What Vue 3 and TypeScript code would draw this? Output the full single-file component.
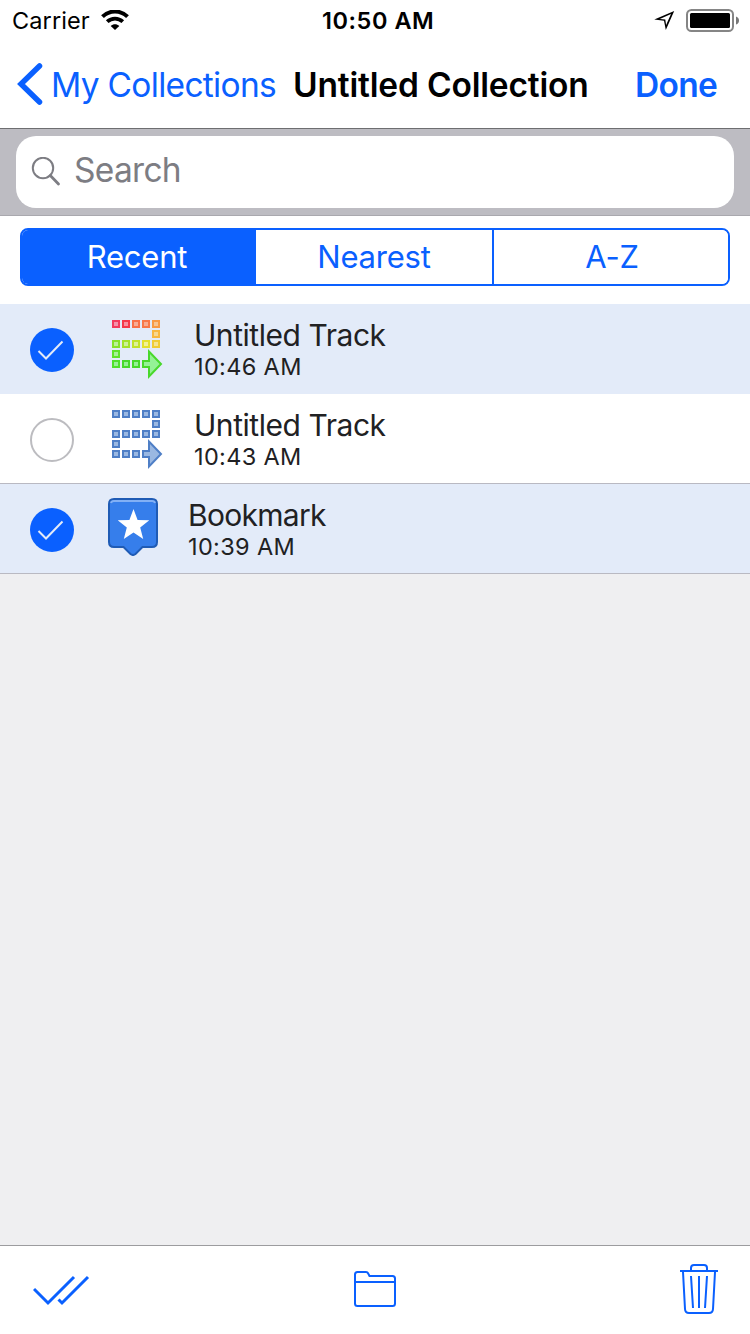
<script setup lang="ts">
import { ref } from 'vue'

interface Item {
  title: string
  time: string
  kind: 'rainbow' | 'blue' | 'bookmark'
  selected: boolean
}

interface Dot {
  x: number
  y: number
  stroke: string
  fill: string
}

const segments = ['Recent', 'Nearest', 'A-Z']
const active = ref(0)

const items = ref<Item[]>([
  { title: 'Untitled Track', time: '10:46 AM', kind: 'rainbow', selected: true },
  { title: 'Untitled Track', time: '10:43 AM', kind: 'blue', selected: false },
  { title: 'Bookmark', time: '10:39 AM', kind: 'bookmark', selected: true },
])

const points: [number, number][] = [
  [0, 0], [10, 0], [20, 0], [30, 0], [40, 0], [40, 10],
  [40, 20], [30, 20], [20, 20], [10, 20], [0, 20], [0, 30],
  [0, 40], [10, 40], [20, 40],
]
const strokes = [
  '#f23b5f', '#f5384a', '#f87048', '#f87848', '#f89a44', '#f8b840',
  '#f0cc34', '#e2e030', '#c0e22c', '#a2e22c', '#84e22c', '#60e22c',
  '#50e02c', '#48d82c', '#48d82c',
]
const fills = [
  '#f492ac', '#f890a0', '#f8ac94', '#f8ac90', '#f8c490', '#f8d890',
  '#f6e490', '#f2f298', '#def298', '#ccf298', '#baf298', '#a6f298',
  '#98f298', '#94f296', '#94f296',
]

function dots(kind: Item['kind']): Dot[] {
  return points.map(([x, y], i) => ({
    x: x + 1,
    y: y + 1,
    stroke: kind === 'rainbow' ? strokes[i] : '#4f7fc6',
    fill: kind === 'rainbow' ? fills[i] : '#9ab8e2',
  }))
}
</script>

<template>
  <div class="screen">
    <header class="status">
      <span class="carrier">Carrier</span>
      <svg class="wifi" width="28" height="20" viewBox="0 0 28 20">
        <path d="M1.5 6.6 C8.5 -0.2 19.5 -0.2 26.5 6.6" fill="none" stroke="#000" stroke-width="4" />
        <path d="M6.2 11.7 C10.7 7.5 17.3 7.5 21.8 11.7" fill="none" stroke="#000" stroke-width="3.8" />
        <path d="M9.7 16 C12.2 13.6 15.8 13.6 18.3 16 L14 20 Z" />
      </svg>
      <span class="clock">10:50 AM</span>
      <svg class="locate" width="21" height="20" viewBox="0 0 21 20">
        <path d="M20.200 1 L0.300 9.600 L10 10.700 L11.800 20 Z M17 3.900 L12.100 15 L11.300 9.400 L5.800 8.900 Z" fill-rule="evenodd" />
      </svg>
      <svg class="battery" width="53" height="23" viewBox="0 0 53 23">
        <rect x="1" y="1" width="46" height="21" rx="4.5" fill="none" stroke="#858585" stroke-width="2" />
        <rect x="4" y="4" width="40" height="15" rx="1.5" />
        <path d="M50 7.5 Q53 8.5 53 11.5 Q53 14.500 50 15.500 Z" fill="#777" />
      </svg>
    </header>

    <nav class="nav">
      <svg class="chevron" width="26" height="44" viewBox="0 0 26 44">
        <path d="M22.500 4 L4 22 L22.500 40" fill="none" stroke="#0a60ff" stroke-width="5.500" stroke-linecap="round" stroke-linejoin="miter" />
      </svg>
      <span class="back">My Collections</span>
      <span class="title">Untitled Collection</span>
      <span class="done">Done</span>
    </nav>

    <div class="search">
      <div class="field">
        <svg width="30" height="30" viewBox="0 0 30 30" fill="none" stroke="#7d7d83">
          <circle cx="12" cy="11" r="10.200" stroke-width="2" />
          <path d="M19.300 18.600 L27.500 27" stroke-width="2.800" stroke-linecap="round" />
        </svg>
        <span class="placeholder">Search</span>
      </div>
    </div>

    <div class="filter">
      <div class="segments">
        <button
          v-for="(name, i) in segments"
          :key="name"
          :class="['segment', 's' + i, { active: active === i }]"
          @click="active = i"
        >
          <span>{{ name }}</span>
        </button>
      </div>
    </div>

    <ul class="list">
      <li
        v-for="(item, i) in items"
        :key="i"
        :class="['row', item.kind, { selected: item.selected }]"
        @click="item.selected = !item.selected"
      >
        <svg class="check" width="44" height="44" viewBox="0 0 44 44">
          <template v-if="item.selected">
            <circle cx="22" cy="22" r="22" fill="#0a60ff" />
            <path d="M8.500 23 L16 30.500 L32.500 13.500" fill="none" stroke="#e3ebf9" stroke-width="2" />
          </template>
          <circle v-else cx="22" cy="22" r="21" fill="#fff" stroke="#bcbcc0" stroke-width="2" />
        </svg>
        <svg v-if="item.kind === 'bookmark'" class="icon" width="50" height="58" viewBox="0 0 50 58">
          <path
            d="M6 1 H44 Q49 1 49 6 V44 Q49 49 44 49 H34.500 L27.500 56 Q25 58 22.500 56 L15.500 49 H6 Q1 49 1 44 V6 Q1 1 6 1 Z"
            fill="#367eeb" stroke="#1f5bb5" stroke-width="2"
          />
          <path d="M3 5 Q3.500 3 6 3 H44 Q46.500 3 47 5" fill="none" stroke="#82b0f5" stroke-width="2" />
          <path d="M25.500 11 L29.600 22 L41.300 22.300 L32.200 29.600 L35.200 41 L25.500 34.600 L15.800 41 L18.800 29.600 L9.700 22.300 L21.400 22 Z" fill="#fff" />
        </svg>
        <svg v-else class="icon" width="52" height="60" viewBox="0 0 52 60">
          <rect
            v-for="(d, n) in dots(item.kind)"
            :key="n"
            :x="d.x"
            :y="d.y"
            width="6"
            height="6"
            :fill="d.fill"
            :stroke="d.stroke"
            stroke-width="2"
          />
          <path
            d="M31 41 H37 V31.500 L49 44 L37 56.500 V47 H31 Z"
            :fill="item.kind === 'rainbow' ? '#94f296' : '#9ab8e2'"
            :stroke="item.kind === 'rainbow' ? '#48d82c' : '#4f7fc6'"
            stroke-width="2"
          />
        </svg>
        <div class="text">
          <div class="name">{{ item.title }}</div>
          <div class="time">{{ item.time }}</div>
        </div>
      </li>
    </ul>

    <main class="blank"></main>

    <footer class="toolbar">
      <svg class="double" width="58" height="32" viewBox="0 0 58 32" fill="none" stroke="#0a60ff" stroke-width="3">
        <path d="M1 15 L15 29 L41 3" />
        <path d="M25.500 25.500 L29 29 L55 3" />
      </svg>
      <svg class="folder" width="42" height="36" viewBox="0 0 42 36" fill="none" stroke="#0a60ff" stroke-width="2">
        <path d="M1 32.500 V3.500 Q1 1 3.500 1 H12 Q13.500 1 14.200 2.500 L15.500 5 H38.500 Q41 5 41 7.500 V32.500 Q41 35 38.500 35 H3.500 Q1 35 1 32.500 Z M1 11 H41" />
      </svg>
      <svg class="trash" width="38" height="50" viewBox="0 0 38 50" fill="none" stroke="#0a60ff" stroke-width="2">
        <path d="M0 7 H38 M11 7 V4 Q11 1 14 1 H24 Q27 1 27 4 V7 M3 8 L5 45 Q5.200 49 9 49 H29 Q32.800 49 33 45 L35 8 M11 12 L13 44 M19 12 V44 M27 12 L25 44" />
      </svg>
    </footer>
  </div>
</template>

<style>
body {
  margin: 0;
  background: #fff;
}
</style>

<style scoped>
.screen {
  width: 750px;
  height: 1334px;
  display: flex;
  flex-direction: column;
  overflow: hidden;
  background: #fff;
  font-family: Inter, "Liberation Sans", sans-serif;
  color: #212123;
  white-space: nowrap;
}
.status {
  height: 40px;
  box-sizing: border-box;
  display: grid;
  grid-template-columns: 101px 221px 332px 32px 64px;
  align-items: center;
  color: #000;
  font-size: 23.500px;
  line-height: 38px;
}
.status > * {
  grid-row: 1;
}
.carrier {
  grid-column: 1;
  padding: 2px 0 0 12px;
  letter-spacing: 0.100px;
}
.wifi {
  grid-column: 2;
}
.clock {
  grid-column: 3;
  padding-top: 2px;
  font-weight: 600;
  letter-spacing: 0.550px;
}
.locate {
  grid-column: 4;
}
.battery {
  grid-column: 5;
}
.nav {
  height: 88px;
  display: grid;
  grid-template-columns: 51px 242px 342px 115px;
  align-items: center;
  border-bottom: 1px solid #6e6e71;
  font-size: 33.500px;
  line-height: 86px;
  color: #0a60ff;
}
.nav span {
  padding-top: 2px;
}
.chevron {
  margin-left: 17px;
}
.back {
  letter-spacing: -0.700px;
}
.title {
  color: #000;
  font-weight: 600;
  letter-spacing: -0.180px;
}
.done {
  font-weight: 600;
  letter-spacing: -0.700px;
}
.search {
  height: 87px;
  box-sizing: border-box;
  padding: 7px 16px;
  background: #bdbcc2;
  border-bottom: 1px solid #a9a8ae;
}
.field {
  height: 72px;
  box-sizing: border-box;
  display: flex;
  align-items: center;
  gap: 13px;
  padding-left: 15px;
  border-radius: 20px;
  background: #fff;
}
.placeholder {
  padding-bottom: 4px;
  color: #7d7d83;
  font-size: 33.500px;
  line-height: 66px;
  letter-spacing: -0.700px;
}
.filter {
  height: 88px;
  box-sizing: border-box;
  padding: 12px 20px;
}
.segments {
  height: 58px;
  box-sizing: border-box;
  display: grid;
  grid-template-columns: 234px 238px 1fr;
  border: 2px solid #0a60ff;
  border-radius: 8px;
  overflow: hidden;
  background: #fff;
}
.segment {
  margin: 0;
  padding: 0;
  border: 0;
  background: #fff;
  color: #0a60ff;
  font: 400 31px/54px Inter, "Liberation Sans", sans-serif;
  letter-spacing: -0.200px;
}
.s0 {
  padding-right: 4px;
}
.s1 {
  border-right: 2px solid #0a60ff;
}
.s2 {
  padding-left: 2px;
}
.segment.active {
  background: #0a60ff;
  color: #fff;
}
.list {
  margin: 0;
  padding: 0;
  list-style: none;
}
.row {
  height: 90px;
  box-sizing: border-box;
  display: flex;
  align-items: flex-start;
  padding-left: 30px;
  background: #fff;
}
.row.selected {
  background: #e3ebf9;
}
.row.blue,
.row.bookmark {
  border-bottom: 1px solid #b9b9c2;
}
.check {
  margin-top: 24px;
}
.icon {
  margin: 16px 0 0 38px;
}
.bookmark .icon {
  margin: 14px 0 0 34px;
}
.text {
  margin: 12px 0 0 30px;
}
.name {
  font-size: 30px;
  line-height: 38px;
  letter-spacing: -0.450px;
}
.bookmark .name {
  letter-spacing: -0.700px;
}
.time {
  font-size: 23.500px;
  line-height: 26px;
  letter-spacing: 0.350px;
}
.blank {
  flex: 1;
  background: #efeff1;
}
.toolbar {
  height: 88px;
  display: grid;
  grid-template-columns: 321px 326px 38px;
  align-items: center;
  padding: 0 32px 0 33px;
  border-top: 1px solid #9c9c9f;
  background: #fff;
}
.toolbar svg {
  margin-bottom: 2px;
}
.toolbar .double {
  margin-bottom: 0;
}
</style>
